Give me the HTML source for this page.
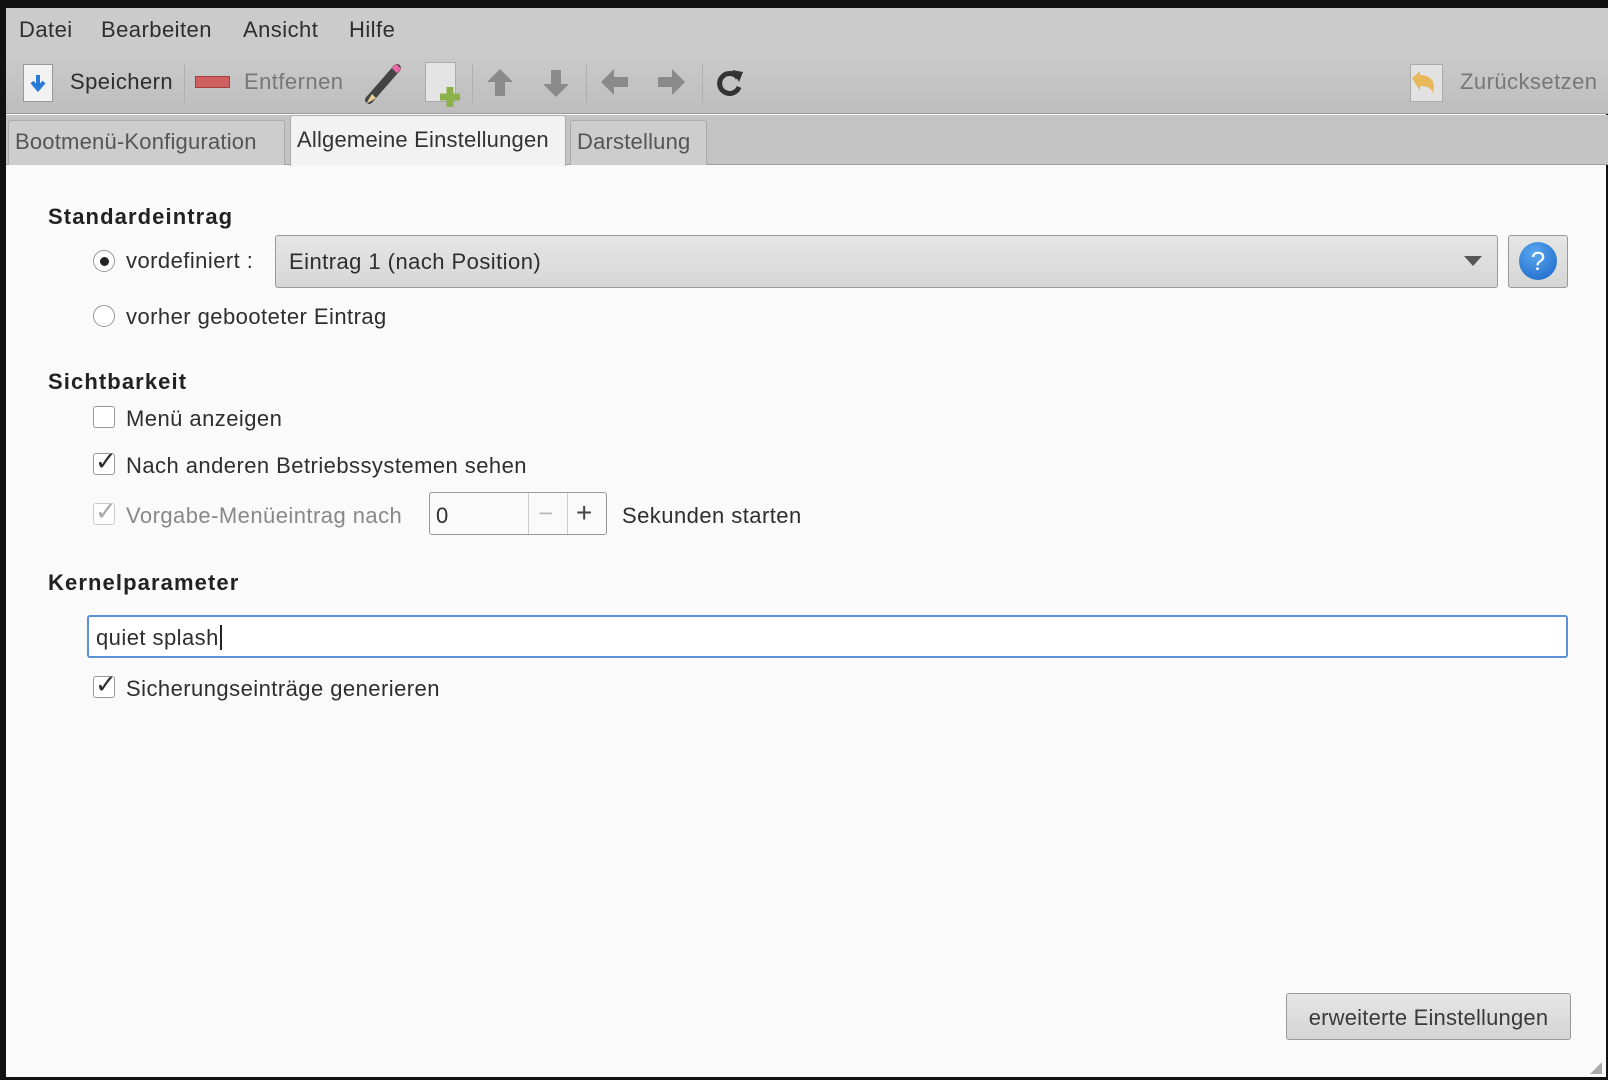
<!DOCTYPE html>
<html><head><meta charset="utf-8"><style>
*{margin:0;padding:0;box-sizing:border-box}
body{width:1608px;height:1080px;background:#111;position:relative;overflow:hidden;font-family:"Liberation Sans","DejaVu Sans",sans-serif;font-size:22px;letter-spacing:0.45px;color:#2e2e2e}
.a{position:absolute;white-space:nowrap}
#win{position:absolute;left:6px;top:8px;width:1600px;height:1069px;background:#fafafa}
#menu{position:absolute;left:6px;top:8px;width:1602px;height:48px;background:#cbcbcb}
#tool{position:absolute;left:6px;top:56px;width:1602px;height:58px;background:linear-gradient(#cacaca,#bdbdbd);border-bottom:1px solid #9a9a9a}
#tabs{position:absolute;left:6px;top:115px;width:1602px;height:50px;background:#c4c4c4;border-bottom:1px solid #a0a0a0}
.tab{position:absolute;top:120px;height:45px;background:#cdcdcd;border:1px solid #aaa;border-bottom:none;border-radius:3px 3px 0 0;color:#555;padding:8px 6px;font-size:22px;letter-spacing:0.2px}
.sep{position:absolute;top:64px;width:1px;height:40px;background:#b0b0b0}
.b{font-weight:bold;font-size:22px;letter-spacing:1.1px;color:#222}
.chk{position:absolute;width:22px;height:22px;border:1px solid #999;border-radius:3px;background:#fff}
.rad{position:absolute;width:22px;height:22px;border:1px solid #999;border-radius:50%;background:#fff}
.ck{font-size:26px;font-weight:bold;letter-spacing:0}
</style></head><body>
<div id="win"></div>
<div id="menu"></div>
<div class="a" style="left:19px;top:17px">Datei</div>
<div class="a" style="left:101px;top:17px">Bearbeiten</div>
<div class="a" style="left:243px;top:17px">Ansicht</div>
<div class="a" style="left:349px;top:17px">Hilfe</div>
<div id="tool"></div>
<div class="a" style="left:23px;top:64px;width:30px;height:38px;background:#f2f2f2;border:1px solid #999"></div>
<svg class="a" style="left:27px;top:72px" width="22" height="22"><path d="M11 3v13M5 10l6 7 6-7" stroke="#2a7ad8" stroke-width="4" fill="none"/></svg>
<div class="a" style="left:70px;top:69px">Speichern</div>
<div class="sep" style="left:184px"></div>
<div class="a" style="left:195px;top:76px;width:35px;height:12px;background:#d06060;border:1px solid #a04040"></div>
<div class="a" style="left:244px;top:69px;color:#777">Entfernen</div>
<svg class="a" style="left:361px;top:60px" width="46" height="46"><path d="M8 40L36 8" stroke="#444" stroke-width="8" stroke-linecap="round"/><path d="M33 6l5 5" stroke="#e6a" stroke-width="6"/><path d="M5 44l6-10 4 4z" fill="#e8d29a"/></svg>
<div class="a" style="left:425px;top:62px;width:31px;height:40px;background:#e4e4e4;border:1px solid #aaa"></div>
<svg class="a" style="left:437px;top:84px" width="26" height="26"><path d="M13 3v20M3 13h20" stroke="#8cb04a" stroke-width="7"/></svg>
<div class="sep" style="left:472px"></div>
<svg class="a" style="left:483px;top:66px" width="34" height="34" fill="#8a8a8a"><path d="M17 3L4 16h8v14h10V16h8z"/></svg>
<svg class="a" style="left:539px;top:66px" width="34" height="34" fill="#8a8a8a"><path d="M17 31L4 18h8V4h10v14h8z"/></svg>
<div class="sep" style="left:586px"></div>
<svg class="a" style="left:598px;top:65px" width="34" height="34" fill="#8a8a8a"><path d="M3 17L16 4v8h14v10H16v8z"/></svg>
<svg class="a" style="left:654px;top:65px" width="34" height="34" fill="#8a8a8a"><path d="M31 17L18 4v8H4v10h14v8z"/></svg>
<div class="sep" style="left:702px"></div>
<svg class="a" style="left:714px;top:66px" width="32" height="32"><path d="M24 12A10 10 0 1 0 25 21" stroke="#333" stroke-width="5" fill="none"/><path d="M18 4l11 2-4 10z" fill="#333"/></svg>
<div class="a" style="left:1410px;top:64px;width:33px;height:38px;background:#e2e2e2;border:1px solid #aaa"></div>
<svg class="a" style="left:1408px;top:68px" width="30" height="28"><path d="M4 10l8-7v4c8 0 14 4 14 12l-1 6c-2-5-6-7-13-7v5z" fill="#e9b85a"/></svg>
<div class="a" style="left:1460px;top:69px;color:#777">Zurücksetzen</div>
<div id="tabs"></div>
<div class="tab" style="left:8px;width:277px">Bootmenü-Konfiguration</div>
<div class="tab" style="left:570px;width:137px">Darstellung</div>
<div class="tab" style="left:290px;top:115px;height:51px;width:276px;background:#f2f2f2;color:#333;padding-top:11px">Allgemeine Einstellungen</div>
<div class="a b" style="left:48px;top:204px">Standardeintrag</div>
<div class="rad" style="left:93px;top:250px"></div><div class="a" style="left:100px;top:257px;width:9px;height:9px;border-radius:50%;background:#222"></div>
<div class="a" style="left:126px;top:248px">vordefiniert :</div>
<div class="a" style="left:275px;top:235px;width:1223px;height:53px;border:1px solid #999;border-radius:3px;background:linear-gradient(#e6e6e6,#d6d6d6);padding:13px 13px">Eintrag 1 (nach Position)</div>
<svg class="a" style="left:1464px;top:256px" width="18" height="10"><path d="M0 0h18L9 10z" fill="#555"/></svg>
<div class="a" style="left:1508px;top:235px;width:60px;height:53px;border:1px solid #999;border-radius:3px;background:linear-gradient(#e6e6e6,#d6d6d6)"></div>
<div class="a" style="left:1519px;top:242px;width:38px;height:38px;border-radius:50%;background:radial-gradient(circle at 40% 30%,#5aa8ee,#1762c8);color:#fff;font-size:26px;text-align:center;line-height:38px;letter-spacing:0">?</div>
<div class="rad" style="left:93px;top:305px"></div>
<div class="a" style="left:126px;top:304px">vorher gebooteter Eintrag</div>
<div class="a b" style="left:48px;top:369px">Sichtbarkeit</div>
<div class="chk" style="left:93px;top:406px"></div>
<div class="a" style="left:126px;top:406px">Menü anzeigen</div>
<div class="chk" style="left:93px;top:453px"></div><div class="a ck" style="left:95px;top:446px">✓</div>
<div class="a" style="left:126px;top:453px">Nach anderen Betriebssystemen sehen</div>
<div class="chk" style="left:93px;top:503px;border-color:#ccc"></div><div class="a ck" style="left:95px;top:496px;color:#aaa;font-weight:normal">✓</div>
<div class="a" style="left:126px;top:503px;color:#888">Vorgabe-Menüeintrag nach</div>
<div class="a" style="left:429px;top:492px;width:178px;height:43px;border:1px solid #999;border-radius:3px;background:#fafafa"></div>
<div class="a" style="left:528px;top:493px;width:1px;height:41px;background:#ccc"></div>
<div class="a" style="left:567px;top:493px;width:1px;height:41px;background:#ccc"></div>
<div class="a" style="left:436px;top:503px">0</div>
<div class="a" style="left:538px;top:498px;font-size:26px;color:#bbb">−</div>
<div class="a" style="left:576px;top:497px;font-size:28px;color:#444">+</div>
<div class="a" style="left:622px;top:503px">Sekunden starten</div>
<div class="a b" style="left:48px;top:570px">Kernelparameter</div>
<div class="a" style="left:87px;top:615px;width:1481px;height:43px;border:2px solid #5b8fd6;border-radius:3px;background:#fff;padding:8px 7px">quiet splash<span style="border-left:2px solid #222;margin-left:1px"></span></div>
<div class="chk" style="left:93px;top:676px"></div><div class="a ck" style="left:95px;top:669px">✓</div>
<div class="a" style="left:126px;top:676px">Sicherungseinträge generieren</div>
<div class="a" style="left:1286px;top:993px;width:285px;height:47px;border:1px solid #999;border-radius:3px;background:linear-gradient(#e6e6e6,#d4d4d4);text-align:center;padding-top:11px;color:#3a3a3a;letter-spacing:0.2px">erweiterte Einstellungen</div>
<svg class="a" style="left:1590px;top:1062px" width="12" height="12"><path d="M12 0v12H0z" fill="#aaa"/></svg>
</body></html>
